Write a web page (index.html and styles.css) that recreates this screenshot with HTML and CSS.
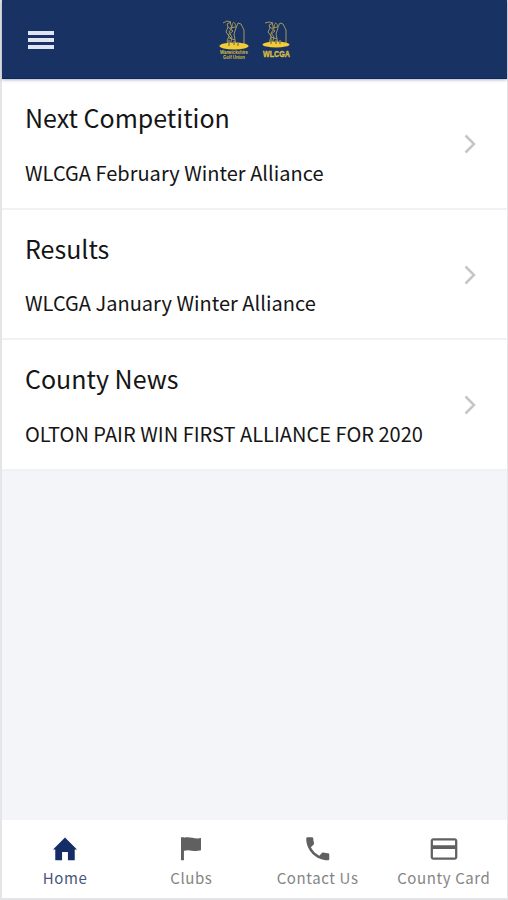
FILE: index.html
```html
<!DOCTYPE html>
<html lang="en">
<head>
<meta charset="utf-8">
<title>WLCGA</title>
<link rel="stylesheet" href="styles.css">
</head>
<body>
<div class="app">
  <header class="topbar">
    <button class="menu" aria-label="Menu"><span></span><span></span><span></span></button>
    <div class="logos">
      <svg class="logo" viewBox="0 0 36 46">
        <g transform="translate(2 2)">
          <path class="figure" d="M5 4l4-2 4 1-4 2 1 3-2 5 3 4-2 5 2 6M12 3l2 6-3 4 3 5-2 9M14 9c0-7 3-8 4 0l-2 6 2 12M10 8l5 4-5 4 4 4M18 9l2-5 3 1 3 6v14M12 9l5-1M11 19l6 2"/>
          <ellipse class="base" cx="16" cy="27" rx="14.500" ry="3.500"/>
          <path class="feet" d="M11 21v6M16 22v4M20 23v4"/>
          <text class="union" x="2" y="35" textLength="28" lengthAdjust="spacingAndGlyphs">Warwickshire</text>
          <text class="union" x="5" y="40" textLength="22" lengthAdjust="spacingAndGlyphs">Golf Union</text>
        </g>
      </svg>
      <svg class="logo" viewBox="0 0 36 46">
        <g transform="translate(2 2)">
          <path class="figure" d="M5 4l4-1 4 1-4 2 1 3-2 4 3 4-2 8M12 4l2 6-3 4 3 4-2 7M14 9c0-6 3-7 4 0l-2 6 2 10M10 8l5 4-5 4 4 4M18 8l2-4 3 1 3 6v13M12 9l5-1M11 18l6 2"/>
          <ellipse class="base" cx="16" cy="25.500" rx="13.500" ry="3"/>
          <path class="feet" d="M11 19v6M16 21v4M20 21v4"/>
          <text class="club" x="3" y="38" textLength="27" lengthAdjust="spacingAndGlyphs">WLCGA</text>
        </g>
      </svg>
    </div>
  </header>
  <main class="list">
    <a class="row">
      <div><h2>Next Competition</h2><p>WLCGA February Winter Alliance</p></div>
      <svg class="chevron" viewBox="0 0 12 20"><path d="M1.500 1.500L10 10l-8.500 8.500"/></svg>
    </a>
    <a class="row">
      <div><h2>Results</h2><p>WLCGA January Winter Alliance</p></div>
      <svg class="chevron" viewBox="0 0 12 20"><path d="M1.500 1.500L10 10l-8.500 8.500"/></svg>
    </a>
    <a class="row">
      <div><h2>County News</h2><p>OLTON PAIR WIN FIRST ALLIANCE FOR 2020</p></div>
      <svg class="chevron" viewBox="0 0 12 20"><path d="M1.500 1.500L10 10l-8.500 8.500"/></svg>
    </a>
  </main>
  <nav class="tabs">
    <a class="tab active"><svg viewBox="0 0 24 24"><path d="M9.800 20.500v-6.200h4.400v6.200h5.100v-8.200h1.700L12 3.300l-9 9h1.700v8.200z"/></svg><span>Home</span></a>
    <a class="tab"><svg viewBox="0 0 24 24"><path d="M4.500 3.200V20.500h2.200V13.400c5-1.500 7 1.200 12.800-.4V3.800c-5 1-8-1.300-12.800-.3v-.3z"/></svg><span>Clubs</span></a>
    <a class="tab"><svg viewBox="-.3 -.3 25 25"><path d="M6.620 10.790c1.440 2.830 3.760 5.140 6.590 6.590l2.200-2.200c.27-.27.67-.36 1.020-.24 1.120.37 2.330.57 3.570.57.550 0 1 .45 1 1V20c0 .55-.45 1-1 1-9.390 0-17-7.610-17-17 0-.55.45-1 1-1h3.500c.55 0 1 .45 1 1 0 1.250.2 2.450.57 3.570.11.350.03.740-.25 1.020l-2.200 2.200z"/></svg><span>Contact Us</span></a>
    <a class="tab"><svg viewBox="0 0 24 24"><path d="M20 4H4c-1.110 0-1.990.89-1.990 2L2 18c0 1.110.89 2 2 2h16c1.110 0 2-.89 2-2V6c0-1.110-.89-2-2-2zm.3 14.300H3.700V12h16.600v6.300zm0-9.200H3.700V5.700h16.600v3.400z"/></svg><span>County Card</span></a>
  </nav>
</div>
</body>
</html>
```

FILE: styles.css
```css
* { box-sizing: border-box; }
body {
  margin: 0;
  background: #e5e5e7;
  font-family: "Noto Sans CJK SC", "Noto Sans", sans-serif;
  color: #151515;
}
.app {
  display: flex;
  flex-direction: column;
  height: 900px;
  padding: 0 1px 2px 2px;
}
.topbar {
  display: grid;
  grid-template-columns: 80px 1fr 80px;
  align-items: center;
  height: 79px;
  background: #183263;
  border-bottom: 1px solid #102657;
  box-shadow: 0 1px 3px rgba(20, 40, 90, .35);
  z-index: 1;
}
.menu {
  display: grid;
  gap: 3px;
  width: 26px;
  margin: 2px 0 0 26px;
  padding: 0;
  border: 0;
  background: none;
}
.menu span { height: 4px; background: #e1e4f3; }
.logos { display: flex; justify-content: center; gap: 6px; padding-top: 1px; }
.logo { width: 36px; height: 46px; overflow: visible; }
.figure { fill: none; stroke: #a1965a; stroke-width: 1; }
.base { fill: #f2cb36; }
.feet { fill: none; stroke: #8d8246; stroke-width: 1.5; }
.logo text { fill: #dabd42; font-family: "Liberation Sans", sans-serif; font-weight: 700; }
.union { font-size: 5.500px; }
.club { font-size: 9px; stroke: #dabd42; stroke-width: .4px; }
.list { flex: 1; background: #f3f5f9; }
.row {
  display: flex;
  align-items: center;
  justify-content: space-between;
  height: 130.500px;
  padding: 0 31px 0 23px;
  background: #fff;
  border-bottom: 2px solid #f1f2f3;
}
h2 { margin: 0; font-size: 25px; line-height: 36px; font-weight: 400; white-space: nowrap; }
p { margin: 22.500px 0 0; font-size: 20px; line-height: 30px; letter-spacing: .02px; font-weight: 400; white-space: nowrap; }
.chevron { width: 12px; height: 20px; margin-top: 1.500px; }
.chevron path { fill: none; stroke: #c6c6c6; stroke-width: 2.500; }
.tabs { display: grid; grid-template-columns: repeat(4, 1fr); height: 78px; background: #fff; }
.tab { display: flex; flex-direction: column; align-items: center; padding-top: 13px; color: #858585; }
.tab svg { width: 32px; height: 32px; fill: #606060; }
.tab span { margin-top: 1px; font-size: 15px; line-height: 24px; letter-spacing: .6px; white-space: nowrap; }
.tab.active { color: #4a5480; }
.tab.active svg { fill: #142d66; }
```
